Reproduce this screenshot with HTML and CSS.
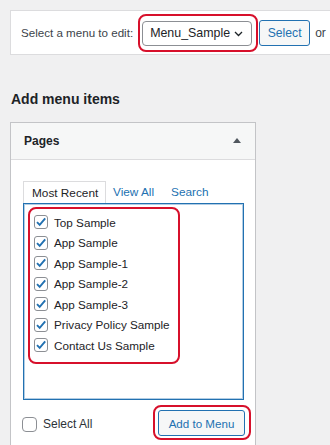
FILE: index.html
```html
<!DOCTYPE html>
<html lang="en">
<head>
    <meta charset="UTF-8">
    <meta name="viewport" content="width=device-width, initial-scale=1.0">
    <title>Menus</title>
    <link rel="stylesheet" href="styles.css">
</head>
<body>
    <div class="manage-menus">
        <span class="manage-label">Select a menu to edit:</span>
        <div class="highlight select-wrap">
            <div class="menu-select">
                <span>Menu_Sample</span>
                <svg class="chevron" width="9" height="6" viewBox="0 0 9 6"><path d="M1 1l3.5 3.5L8 1" fill="none" stroke="#1d2327" stroke-width="1.3"/></svg>
            </div>
        </div>
        <button class="btn-select">Select</button>
        <span class="or">or</span>
    </div>

    <h2 class="section-title">Add menu items</h2>

    <div class="postbox">
        <div class="postbox-header">
            <span class="postbox-title">Pages</span>
            <span class="toggle"></span>
        </div>
        <div class="postbox-inside">
            <div class="tabs">
                <span class="tab active">Most Recent</span>
                <span class="tab">View All</span>
                <span class="tab">Search</span>
            </div>
            <div class="tabs-panel">
                <ul class="highlight page-list">
                    <li><span class="check on"></span>Top Sample</li>
                    <li><span class="check on"></span>App Sample</li>
                    <li><span class="check on"></span>App Sample-1</li>
                    <li><span class="check on"></span>App Sample-2</li>
                    <li><span class="check on"></span>App Sample-3</li>
                    <li><span class="check on"></span>Privacy Policy Sample</li>
                    <li><span class="check on"></span>Contact Us Sample</li>
                </ul>
            </div>
            <div class="button-row">
                <label class="select-all"><span class="check big"></span>Select All</label>
                <div class="highlight add-wrap">
                    <button class="btn-add">Add to Menu</button>
                </div>
            </div>
        </div>
    </div>
</body>
</html>
```

FILE: styles.css
```css
html, body {
    height: 445px;
}
body {
    margin: 0;
    padding: 10px 0 0 10px;
    background-color: #f0f0f1;
    color: #1d2327;
    font-family: 'Liberation Sans', Arial, sans-serif;
    font-size: 11.7px;
    overflow: hidden;
    box-sizing: border-box;
}
.highlight {
    border: 2px solid #d7102b;
    border-radius: 8px;
    box-sizing: border-box;
}
.manage-menus {
    display: flex;
    align-items: center;
    width: 320px;
    height: 45px;
    box-sizing: border-box;
    background-color: #fff;
    border: 1px solid #dcdcde;
    border-right: none;
    padding-left: 10px;
    white-space: nowrap;
}
.manage-label {
    color: #3c434a;
    font-size: 11.6px;
    margin-right: 5px;
}
.select-wrap {
    padding: 5px 4px 4px 2px;
}
.menu-select {
    display: flex;
    align-items: center;
    justify-content: space-between;
    width: 110px;
    height: 25px;
    box-sizing: border-box;
    border: 1px solid #8c8f94;
    border-radius: 4px;
    padding: 0 8px 0 7px;
    font-size: 12.4px;
    color: #1d2327;
}
.chevron {
    margin-top: 1px;
}
.btn-select {
    margin-left: 1px;
    width: 51px;
    height: 26px;
    border: 1px solid #2271b1;
    border-radius: 3px;
    background-color: #f6f7f7;
    color: #2271b1;
    font-family: inherit;
    font-size: 12.2px;
    padding: 0;
}
.or {
    margin-left: 5px;
    color: #3c434a;
    font-size: 12px;
}
.section-title {
    margin: 34px 0 13px 1px;
    font-size: 14px;
    line-height: 20px;
    font-weight: bold;
    color: #1d2327;
}
.postbox {
    width: 246px;
    height: 323px;
    box-sizing: border-box;
    background-color: #fff;
    border: 1px solid #c3c4c7;
    border-bottom: none;
}
.postbox-header {
    display: flex;
    align-items: center;
    justify-content: space-between;
    height: 37px;
    box-sizing: border-box;
    background-color: #f6f7f7;
    border-bottom: 1px solid #dcdcde;
    padding: 0 14px 0 13px;
}
.postbox-title {
    font-size: 12px;
    font-weight: bold;
}
.toggle {
    width: 0;
    height: 0;
    border-left: 4px solid transparent;
    border-right: 4px solid transparent;
    border-bottom: 5px solid #50575e;
    margin-bottom: 1px;
}
.postbox-inside {
    padding: 21px 11px 0 12px;
}
.tabs {
    display: flex;
    align-items: flex-end;
    height: 22px;
}
.tab {
    height: 22px;
    line-height: 22px;
    color: #2271b1;
    font-size: 11.8px;
    margin-right: 17px;
}
.tab.active {
    box-sizing: border-box;
    width: 83px;
    padding-left: 8px;
    color: #1d2327;
    border: 1px solid #dcdcde;
    border-bottom: none;
    margin-right: 7px;
}
.tabs-panel {
    height: 197px;
    box-sizing: border-box;
    border: 1px solid #2271b1;
    box-shadow: inset 0 0 0 1px rgba(34, 113, 177, 0.35);
    padding: 3px 0 0 4px;
}
.page-list {
    list-style: none;
    margin: 0;
    width: 152px;
    padding: 3px 0 6px 4px;
}
.page-list li {
    display: flex;
    align-items: center;
    height: 20.5px;
    color: #1d2327;
}
.check {
    display: inline-block;
    width: 14px;
    height: 14px;
    box-sizing: border-box;
    border: 1px solid #8c8f94;
    border-radius: 3px;
    margin-right: 6px;
    background-color: #fff;
    background-repeat: no-repeat;
    background-position: center;
}
.check.on {
    background-image: url("data:image/svg+xml;utf8,<svg xmlns='http://www.w3.org/2000/svg' width='12' height='12' viewBox='0 0 12 12'><path d='M2 6.1l2.7 2.8L10.2 2.3' fill='none' stroke='%232271b1' stroke-width='1.9'/></svg>");
}
.check.big {
    width: 15px;
    height: 15px;
    border-radius: 4px;
}
.button-row {
    display: flex;
    align-items: center;
    justify-content: space-between;
    margin: 5px -7px 0 -1px;
}
.select-all {
    display: flex;
    align-items: center;
    font-size: 12px;
    color: #2c3338;
    margin-top: 3px;
}
.add-wrap {
    padding: 3px 4px 2px 3px;
}
.btn-add {
    width: 87px;
    height: 26px;
    border: 1px solid #2271b1;
    border-radius: 3px;
    background-color: #f6f7f7;
    color: #2271b1;
    font-family: inherit;
    font-size: 11.6px;
    padding: 0;
}
```
